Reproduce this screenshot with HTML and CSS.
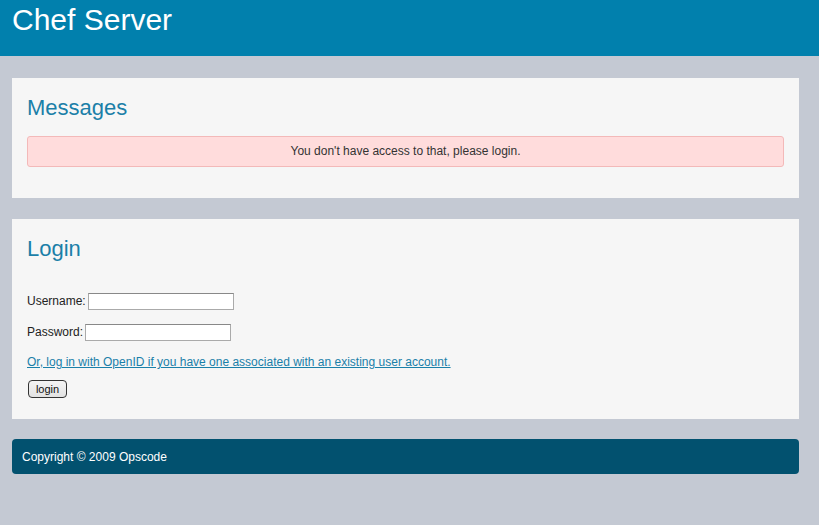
FILE: index.html
```html
<!DOCTYPE html>
<html>
<head>
<meta charset="utf-8">
<title>Chef Server</title>
<link rel="stylesheet" href="styles.css">
</head>
<body>
<header class="top">
  <h1 class="brand">Chef Server</h1>
</header>
<main class="wrap">
  <section class="box">
    <h2 class="box-title">Messages</h2>
    <div class="flash">You don't have access to that, please login.</div>
  </section>
  <section class="box box-login">
    <h2 class="box-title">Login</h2>
    <form class="login-form">
      <div class="row"><label class="lbl">Username:</label><input class="field" type="text"></div>
      <div class="row"><label class="lbl">Password:</label><input class="field" type="password"></div>
      <a class="openid" href="#">Or, log in with OpenID if you have one associated with an existing user account.</a>
      <button class="btn" type="button">login</button>
    </form>
  </section>
  <footer class="foot">Copyright © 2009 Opscode</footer>
</main>
</body>
</html>
```
FILE: styles.css
```css
html, body {
  margin: 0;
  padding: 0;
}
body {
  background: #c4c9d3;
  font-family: "Liberation Sans", Arial, sans-serif;
  color: #222;
  font-size: 12px;
  height: 525px;
  overflow: hidden;
}
.top {
  background: #0180ad;
  height: 56px;
  padding-left: 12px;
  box-sizing: border-box;
}
.brand {
  margin: 0;
  font-weight: normal;
  color: #fff;
  font-size: 30px;
  line-height: 40px;
}
.wrap {
  margin: 22px 20px 0 12px;
  display: flex;
  flex-direction: column;
  gap: 21px;
}
.box {
  background: #f6f6f6;
  padding: 16px 15px 31px;
}
.box-title {
  margin: 0;
  font-weight: normal;
  font-size: 22px;
  line-height: 28px;
  color: #1b7fa8;
}
.flash {
  margin-top: 14px;
  background: #ffdcdc;
  border: 1px solid #f3b9b9;
  border-radius: 3px;
  padding: 7px;
  line-height: 15px;
  text-align: center;
  color: #333;
}
.box-login {
  padding-bottom: 21px;
}
.login-form {
  margin-top: 30px;
  display: flex;
  flex-direction: column;
  align-items: flex-start;
}
.row {
  display: flex;
  align-items: center;
  height: 17px;
  margin-bottom: 14px;
}
.lbl {
  margin-right: 2px;
  line-height: 15px;
}
.field {
  width: 146px;
  height: 17px;
  box-sizing: border-box;
  border: 1px solid #aaa;
  border-top-color: #888;
  background: #fff;
  padding: 0 2px;
  margin: 0;
}
.openid {
  color: #1a80a9;
  line-height: 15px;
  text-decoration: underline;
}
.btn {
  margin: 10px 0 0 1px;
  height: 18px;
  width: 39px;
  padding: 0;
  border: 1px solid #333;
  border-radius: 4px;
  background: linear-gradient(#f4f4f4, #e2e2e2);
  font-family: "Liberation Sans", Arial, sans-serif;
  font-size: 11px;
  color: #111;
}
.foot {
  background: #02516f;
  color: #fff;
  border-radius: 4px;
  padding: 11px 10px 9px;
  line-height: 15px;
  margin-top: -1px;
}
```
